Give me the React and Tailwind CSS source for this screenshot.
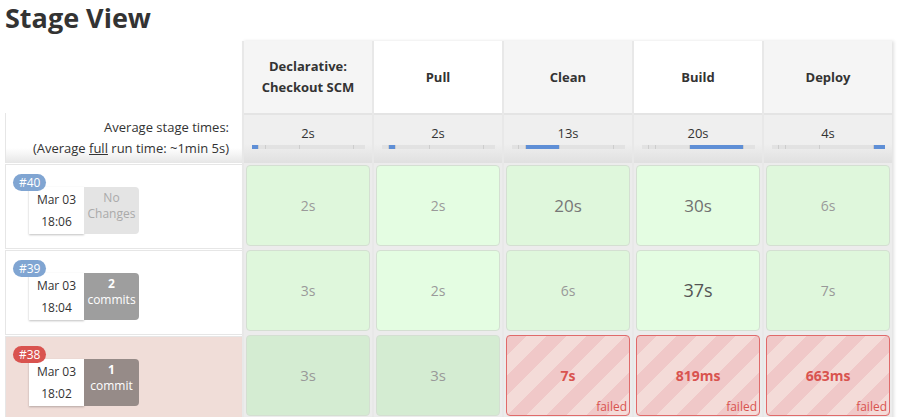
import React from 'react';

const stages = ['Declarative:\nCheckout SCM', 'Pull', 'Clean', 'Build', 'Deploy'];
const averages = ['2s', '2s', '13s', '20s', '4s'];
// widths of each stage inside the run-time bar (113px total)
const segs = [7, 7, 34, 54, 11];
const headBg = ['bg-[#f5f5f5]', 'bg-white', 'bg-[#f5f5f5]', 'bg-white', 'bg-[#f5f5f5]'];

const builds = [
  {
    id: '#40', date: 'Mar 03', time: '18:06', failed: false,
    changes: { top: 'No', bottom: 'Changes', kind: 'none' },
    cells: [
      { t: '2s', cls: 'text-[14px] text-[#9a9a9a]' },
      { t: '2s', cls: 'text-[14px] text-[#9a9a9a]' },
      { t: '20s', cls: 'text-[17px] text-[#777]' },
      { t: '30s', cls: 'text-[17px] text-[#707070]' },
      { t: '6s', cls: 'text-[14px] text-[#9a9a9a]' },
    ],
  },
  {
    id: '#39', date: 'Mar 03', time: '18:04', failed: false,
    changes: { top: '2', bottom: 'commits', kind: 'some' },
    cells: [
      { t: '3s', cls: 'text-[14px] text-[#9a9a9a]' },
      { t: '2s', cls: 'text-[14px] text-[#9a9a9a]' },
      { t: '6s', cls: 'text-[14px] text-[#999]' },
      { t: '37s', cls: 'text-[18px] text-[#555]' },
      { t: '7s', cls: 'text-[14px] text-[#999]' },
    ],
  },
  {
    id: '#38', date: 'Mar 03', time: '18:02', failed: true,
    changes: { top: '1', bottom: 'commit', kind: 'fail' },
    cells: [
      { t: '3s', cls: 'text-[15px] text-[#999]' },
      { t: '3s', cls: 'text-[15px] text-[#999]' },
      { t: '7s', fail: true },
      { t: '819ms', fail: true },
      { t: '663ms', fail: true },
    ],
  },
];

const greenCell = ['bg-[#dff7dc]', 'bg-[#e4fde2]', 'bg-[#dff7dc]', 'bg-[#e4fde2]', 'bg-[#dff7dc]'];

function RunBar({ active }) {
  return (
    <div className="flex w-[113px] h-[4px] gap-[1px] bg-[#cdcdcd]">
      {segs.map((w, i) => (
        <div
          key={i}
          style={{ width: w - (i < segs.length - 1 ? 1 : 0) }}
          className={i === active ? 'h-full bg-[#5f8fd6]' : 'h-full bg-[#e2e2e2]'}
        />
      ))}
    </div>
  );
}

function BuildCard({ b }) {
  const changeCls =
    b.changes.kind === 'none'
      ? 'bg-[#e4e4e4] text-[#aaa]'
      : b.changes.kind === 'fail'
      ? 'bg-[#968b88] text-white'
      : 'bg-[#9e9e9e] text-white';
  return (
    <div className="relative h-full">
      <div className="absolute left-[23px] top-[22px] flex h-[47px]">
        <div className="w-[55px] bg-white flex flex-col items-center justify-center text-[12px] leading-[22px] text-[#333] shadow-[0_1px_2px_rgba(0,0,0,0.25)]">
          <span>{b.date}</span>
          <span>{b.time}</span>
        </div>
        <div className={`w-[55px] rounded-r-[4px] flex flex-col items-center pt-[3px] text-[12px] leading-[16px] ${changeCls}`}>
          <span className={b.changes.kind === 'none' ? '' : 'font-bold'}>{b.changes.top}</span>
          <span>{b.changes.bottom}</span>
        </div>
      </div>
      <div
        className={`absolute left-[7px] top-[9px] h-[17px] px-[6px] rounded-full text-white text-[12px] leading-[17px] ${
          b.failed ? 'bg-[#d9534f]' : 'bg-[#80a5d2]'
        }`}
      >
        {b.id}
      </div>
    </div>
  );
}

export default function App() {
  return (
    <div className="bg-white min-h-screen font-['Open_Sans',sans-serif] text-[#333] overflow-hidden">
      <h1 className="px-[5px] text-[27px] font-bold leading-[36px] text-[#333]">Stage View</h1>
      <div className="flex pl-[5px] mt-[5px]">
        {/* left column */}
        <div className="w-[237px] flex flex-col">
          <div className="h-[72px]" />
          <div className="h-[50px] flex flex-col items-end justify-center pr-[13px] text-[13px] leading-[21px] border-l border-[#e6e6e6] bg-[linear-gradient(to_bottom,#fff_70%,#e6e6e6)]">
            <span>Average stage times:</span>
            <span>
              (Average <span className="underline">full</span> run time: ~1min 5s)
            </span>
          </div>
          {builds.map((b) => (
            <div
              key={b.id}
              className={`h-[85px] border border-[#e6e6e6] border-r-0 mt-[1px] ${b.failed ? 'bg-[#f0ddd8]' : 'bg-white'}`}
            >
              <BuildCard b={b} />
            </div>
          ))}
        </div>

        {/* stage table */}
        <div className="flex shadow-[2px_0_3px_rgba(0,0,0,0.12)]">
          {stages.map((s, i) => (
            <div key={s} className="w-[130px] flex flex-col border-l-2 border-[#e8e8e8]">
              <div className={`h-[72px] flex items-center justify-center text-center text-[13px] font-bold leading-[21px] whitespace-pre-line ${headBg[i]}`}>
                {s}
              </div>
              <div className="h-[50px] flex flex-col items-center pt-[9px] border-t-2 border-[#e4e4e4] bg-[linear-gradient(to_bottom,#efefef_60%,#e0e0e0)]">
                <span className="text-[13px] leading-[18px]">{averages[i]}</span>
                <div className="mt-[3px]">
                  <RunBar active={i} />
                </div>
              </div>
              {builds.map((b) => {
                const c = b.cells[i];
                return (
                  <div key={b.id} className="h-[85px] bg-[#ececec] p-[2px]">
                    {c.fail ? (
                      <div className="relative h-full rounded-[4px] border border-[#e06a6a] bg-[repeating-linear-gradient(135deg,#f0c8c8_0px,#f0c8c8_14px,#f4dbd8_14px,#f4dbd8_28px)] flex items-center justify-center">
                        <span className="text-[14px] font-bold text-[#d9534f]">{c.t}</span>
                        <span className="absolute right-[2px] bottom-0 text-[12px] leading-[16px] text-[#d9534f]">failed</span>
                      </div>
                    ) : (
                      <div
                        className={`h-full rounded-[4px] border border-[#d4dfd2] flex items-center justify-center ${
                          b.failed ? 'bg-[#d4ecd2]' : greenCell[i]
                        } ${c.cls}`}
                      >
                        {c.t}
                      </div>
                    )}
                  </div>
                );
              })}
            </div>
          ))}
        </div>
      </div>
    </div>
  );
}
